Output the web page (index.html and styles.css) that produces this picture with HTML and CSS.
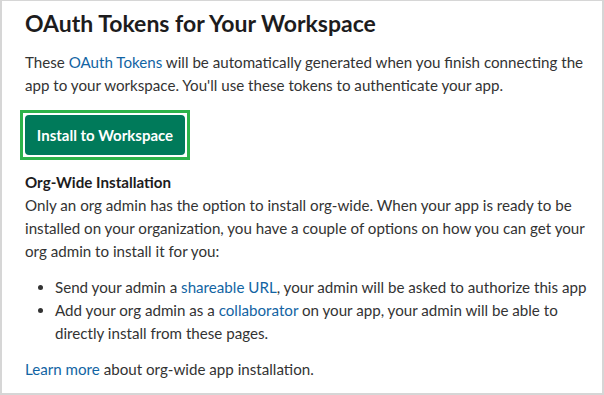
FILE: index.html
```html
<!DOCTYPE html>
<html lang="en">

<head>
  <meta charset="UTF-8">
  <meta name="viewport" content="width=device-width, initial-scale=1.0">
  <title>OAuth Tokens</title>
  <link rel="stylesheet" href="styles.css">
</head>

<body>
  <div class="panel">
    <h1>OAuth Tokens for Your Workspace</h1>
    <p class="intro">
      These <a href="#">OAuth Tokens</a> will be automatically generated when you finish connecting the
      app to your workspace. You'll use these tokens to authenticate your app.
    </p>

    <!-- highlighted install button -->
    <div class="highlight">
      <button class="install-btn">Install to Workspace</button>
    </div>

    <div class="org-wide">
      <h2>Org-Wide Installation</h2>
      <p>
        Only an org admin has the option to install org-wide. When your app is ready to be
        installed on your organization, you have a couple of options on how you can get your
        org admin to install it for you:
      </p>
    </div>

    <ul class="options">
      <li>Send your admin a <a href="#">shareable URL</a>, your admin will be asked to authorize this app</li>
      <li>Add your org admin as a <a href="#">collaborator</a> on your app, your admin will be able to
        directly install from these pages.</li>
    </ul>

    <p class="learn"><a href="#">Learn more</a> about org-wide app installation.</p>
  </div>
</body>

</html>
```

FILE: styles.css
```css
body {
  margin: 0;
  font-family: Lato, "Noto Sans", sans-serif;
  background-color: #fff;
}

.panel {
  width: 604px;
  height: 395px;
  box-sizing: border-box;
  border: 2px solid #d6d6d6;
  border-top-width: 1px;
  padding: 0 12px 0 23px;
  overflow: hidden;
}

h1 {
  margin: 7px 0 0;
  font-size: 23px;
  line-height: 30px;
  font-weight: 700;
  color: #1d1c1d;
}

p {
  margin: 0;
}

.intro {
  margin-top: 13px;
  font-size: 15.15px;
  line-height: 23px;
  color: #333;
}

a {
  color: #1264a3;
  text-decoration: none;
}

.highlight {
  display: inline-block;
  margin: 13px 0 0 -5px;
  padding: 2px;
  border: 3px solid #2db34a;
}

.install-btn {
  display: block;
  width: 160px;
  height: 40px;
  border: none;
  border-radius: 4px;
  background-color: #007a5a;
  color: #fff;
  font-family: Lato, "Noto Sans", sans-serif;
  font-size: 15px;
  font-weight: 700;
  cursor: pointer;
}

.org-wide {
  margin-top: 11px;
  font-size: 15.15px;
  line-height: 23px;
  color: #333;
}

.org-wide h2 {
  margin: 0;
  font-size: 15.15px;
  line-height: 23px;
  font-weight: 700;
  color: #1d1c1d;
}

.options {
  margin: 13px 0 0;
  padding-left: 30px;
  font-size: 15.15px;
  line-height: 23px;
  color: #333;
}

.learn {
  margin-top: 13px;
  font-size: 15.15px;
  line-height: 23px;
  color: #333;
}
```
